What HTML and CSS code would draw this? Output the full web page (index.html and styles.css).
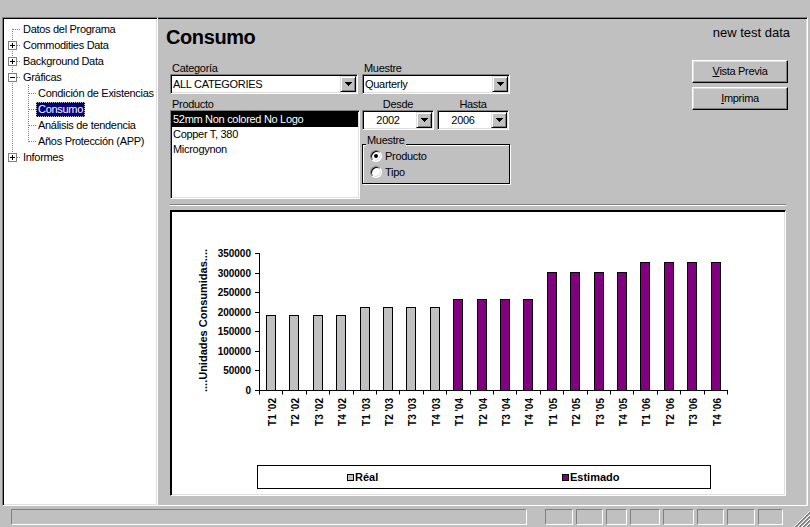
FILE: index.html
```html
<!doctype html>
<html>
<head>
<meta charset="utf-8">
<link rel="stylesheet" href="styles.css">
<title>Consumo</title>
</head>
<body>
<div class="topbar"></div>

<div class="main">
  <div class="tree">
    <div class="node"><span class="cell l-first"></span><span class="node-label">Datos del Programa</span></div>
    <div class="node"><span class="cell l-mid"><span class="box plus"></span></span><span class="node-label">Commodities Data</span></div>
    <div class="node"><span class="cell l-mid"><span class="box plus"></span></span><span class="node-label">Background Data</span></div>
    <div class="node"><span class="cell l-mid"><span class="box minus"></span></span><span class="node-label">Gráficas</span></div>
    <div class="node child"><span class="cell l-pass"></span><span class="cell l-mid"></span><span class="node-label">Condición de Existencias</span></div>
    <div class="node child"><span class="cell l-pass"></span><span class="cell l-mid"></span><span class="node-label selected">Consumo</span></div>
    <div class="node child"><span class="cell l-pass"></span><span class="cell l-mid"></span><span class="node-label">Análisis de tendencia</span></div>
    <div class="node child"><span class="cell l-pass"></span><span class="cell l-last"></span><span class="node-label">Años Protección (APP)</span></div>
    <div class="node"><span class="cell l-last"><span class="box plus"></span></span><span class="node-label">Informes</span></div>
  </div>

  <div class="content">
    <div class="head">
      <h1 class="title">Consumo</h1>
      <div class="tag">new test data</div>
    </div>

    <div class="controls">
      <div class="form">
        <div class="col1">
          <div class="lbl">Categoría</div>
          <div class="combo cat"><span class="combo-text">ALL CATEGORIES</span><span class="drop"></span></div>
          <div class="lbl mt4">Producto</div>
          <div class="list">
            <div class="item sel">52mm Non colored No Logo</div>
            <div class="item">Copper T, 380</div>
            <div class="item">Microgynon</div>
          </div>
        </div>
        <div class="col2">
          <div class="lbl">Muestre</div>
          <div class="combo"><span class="combo-text">Quarterly</span><span class="drop"></span></div>
          <div class="years mt4">
            <div class="year">
              <div class="lbl center">Desde</div>
              <div class="combo"><span class="combo-text center">2002</span><span class="drop"></span></div>
            </div>
            <div class="year">
              <div class="lbl center">Hasta</div>
              <div class="combo"><span class="combo-text center">2006</span><span class="drop"></span></div>
            </div>
          </div>
          <div class="group">
            <div class="legend">Muestre</div>
            <div class="radio-row first"><span class="radio on"></span>Producto</div>
            <div class="radio-row"><span class="radio"></span>Tipo</div>
          </div>
        </div>
      </div>

      <div class="buttons">
        <div class="btn"><u>V</u>ista Previa</div>
        <div class="btn"><u>I</u>mprima</div>
      </div>
    </div>

    <div class="sep"></div>

    <div class="chart">
      <svg class="plot" width="614" height="284" viewBox="171 211 614 284">
        <g stroke="#000" stroke-width="1">
          <g fill="#c0c0c0">
            <rect x="266.5" y="315.5" width="9" height="75"/>
            <rect x="289.5" y="315.5" width="9" height="75"/>
            <rect x="313.5" y="315.5" width="9" height="75"/>
            <rect x="336.5" y="315.5" width="9" height="75"/>
            <rect x="360.5" y="307.5" width="9" height="83"/>
            <rect x="383.5" y="307.5" width="9" height="83"/>
            <rect x="406.5" y="307.5" width="9" height="83"/>
            <rect x="430.5" y="307.5" width="9" height="83"/>
          </g>
          <g fill="#800080">
            <rect x="453.5" y="299.5" width="9" height="91"/>
            <rect x="477.5" y="299.5" width="9" height="91"/>
            <rect x="500.5" y="299.5" width="9" height="91"/>
            <rect x="523.5" y="299.5" width="9" height="91"/>
            <rect x="547.5" y="272.5" width="9" height="118"/>
            <rect x="570.5" y="272.5" width="9" height="118"/>
            <rect x="594.5" y="272.5" width="9" height="118"/>
            <rect x="617.5" y="272.5" width="9" height="118"/>
            <rect x="640.5" y="262.5" width="9" height="128"/>
            <rect x="664.5" y="262.5" width="9" height="128"/>
            <rect x="687.5" y="262.5" width="9" height="128"/>
            <rect x="711.5" y="262.5" width="9" height="128"/>
          </g>
          <path fill="none" d="M259.5 253v138 M259 390.5H728
            M255 390.5h4 M255 370.5h4 M255 351.5h4 M255 331.5h4 M255 312.5h4 M255 292.5h4 M255 273.5h4 M255 253.5h4
            M259.5 390.5v4 M282.5 390.5v4 M306.5 390.5v4 M329.5 390.5v4 M353.5 390.5v4 M376.5 390.5v4 M399.5 390.5v4
            M423.5 390.5v4 M446.5 390.5v4 M470.5 390.5v4 M493.5 390.5v4 M516.5 390.5v4 M540.5 390.5v4 M563.5 390.5v4
            M587.5 390.5v4 M610.5 390.5v4 M633.5 390.5v4 M657.5 390.5v4 M680.5 390.5v4 M704.5 390.5v4 M727.5 390.5v4"/>
        </g>

        <g class="ticks" text-anchor="end">
          <text x="251" y="394">0</text>
          <text x="251" y="374">50000</text>
          <text x="251" y="355">100000</text>
          <text x="251" y="335">150000</text>
          <text x="251" y="316">200000</text>
          <text x="251" y="296">250000</text>
          <text x="251" y="277">300000</text>
          <text x="251" y="257">350000</text>
        </g>

        <text class="axis-title" text-anchor="middle" transform="translate(207 320.5) rotate(-90)">....Unidades Consumidas....</text>

        <g class="ticks" text-anchor="end">
          <text transform="translate(276 398) rotate(-90)">T1 '02</text>
          <text transform="translate(299 398) rotate(-90)">T2 '02</text>
          <text transform="translate(323 398) rotate(-90)">T3 '02</text>
          <text transform="translate(346 398) rotate(-90)">T4 '02</text>
          <text transform="translate(370 398) rotate(-90)">T1 '03</text>
          <text transform="translate(393 398) rotate(-90)">T2 '03</text>
          <text transform="translate(416 398) rotate(-90)">T3 '03</text>
          <text transform="translate(440 398) rotate(-90)">T4 '03</text>
          <text transform="translate(463 398) rotate(-90)">T1 '04</text>
          <text transform="translate(487 398) rotate(-90)">T2 '04</text>
          <text transform="translate(510 398) rotate(-90)">T3 '04</text>
          <text transform="translate(533 398) rotate(-90)">T4 '04</text>
          <text transform="translate(557 398) rotate(-90)">T1 '05</text>
          <text transform="translate(580 398) rotate(-90)">T2 '05</text>
          <text transform="translate(604 398) rotate(-90)">T3 '05</text>
          <text transform="translate(627 398) rotate(-90)">T4 '05</text>
          <text transform="translate(650 398) rotate(-90)">T1 '06</text>
          <text transform="translate(674 398) rotate(-90)">T2 '06</text>
          <text transform="translate(697 398) rotate(-90)">T3 '06</text>
          <text transform="translate(721 398) rotate(-90)">T4 '06</text>
        </g>

        <rect x="257.5" y="465.5" width="453" height="23" fill="#fff" stroke="#000"/>
        <rect x="347.5" y="474.5" width="6" height="6" fill="#c0c0c0" stroke="#000"/>
        <text class="legend-text" x="355" y="481">Réal</text>
        <rect x="562.5" y="474.5" width="6" height="6" fill="#800080" stroke="#000"/>
        <text class="legend-text" x="570" y="481">Estimado</text>
      </svg>
    </div>
  </div>
</div>

<div class="status">
  <div class="pane pane-main"></div>
  <div class="panes">
    <div class="pane" style="width:28px"></div>
    <div class="pane" style="width:27px"></div>
    <div class="pane" style="width:21px"></div>
    <div class="pane" style="width:30px"></div>
    <div class="pane" style="width:31px"></div>
    <div class="pane" style="width:27px"></div>
    <div class="pane" style="width:28px"></div>
    <div class="pane" style="width:25px"></div>
  </div>
  <svg class="grip" width="17" height="17" viewBox="0 0 17 17">
    <path d="M17 1L1 17 M17 5L5 17 M17 9L9 17 M17 13L13 17" stroke="#fff" fill="none"/>
    <path d="M17 2L2 17 M17 3L3 17 M17 6L6 17 M17 7L7 17 M17 10L10 17 M17 11L11 17 M17 14L14 17 M17 15L15 17" stroke="#808080" fill="none"/>
  </svg>
</div>
</body>
</html>
```

FILE: styles.css
```css
* {
    box-sizing: border-box;
}
html,
body {
    margin: 0;
    padding: 0;
}
body {
    width: 810px;
    height: 527px;
    overflow: hidden;
    background: #c0c0c0;
    font-family: "Liberation Sans", Arial, sans-serif;
    font-size: 11px;
    letter-spacing: -0.3px;
    color: #000;
}
.topbar {
    height: 17px;
}
.main {
    display: flex;
    height: 489px;
    padding-left: 2px;
}

/* tree */
.tree {
    width: 156px;
    overflow: hidden;
    background: #fff;
    border: 1px solid;
    border-color: #808080 #fff #fff #808080;
    box-shadow: inset 1px 1px #000, inset -1px -1px #dfdfdf;
    padding: 3px 0 0 1px;
}
.node {
    display: flex;
    align-items: center;
    height: 16px;
}
.cell {
    width: 16px;
    height: 16px;
    flex: none;
    background-repeat: no-repeat;
}
.l-first,
.l-mid,
.l-last {
    background-image:
        repeating-linear-gradient(to bottom, #808080 0 1px, transparent 1px 2px),
        repeating-linear-gradient(to right, #808080 0 1px, transparent 1px 2px);
}
.l-mid {
    background-size: 1px 16px, 8px 1px;
    background-position: 8px 0, 9px 8px;
}
.l-first {
    background-size: 1px 8px, 8px 1px;
    background-position: 8px 8px, 9px 8px;
}
.l-last {
    background-size: 1px 9px, 8px 1px;
    background-position: 8px 0, 9px 8px;
}
.l-pass {
    background-image: repeating-linear-gradient(to bottom, #808080 0 1px, transparent 1px 2px);
    background-size: 1px 16px;
    background-position: 8px 0;
}
.box {
    display: block;
    width: 9px;
    height: 9px;
    margin: 4px 0 0 4px;
    border: 1px solid #808080;
    background: linear-gradient(#000, #000) 1px 3px / 5px 1px no-repeat, #fff;
}
.box.plus {
    background:
        linear-gradient(#000, #000) 3px 1px / 1px 5px no-repeat,
        linear-gradient(#000, #000) 1px 3px / 5px 1px no-repeat,
        #fff;
}
.node-label {
    line-height: 13px;
    border: 1px solid transparent;
    padding: 0 1px;
    margin-left: 1px;
    white-space: nowrap;
}
.child .node-label {
    margin-left: 0;
}
.node-label.selected {
    background: #000080;
    color: #fff;
    border: 1px dotted #c0c0c0;
}

/* right pane */
.content {
    width: 650px;
    border-top: 1px solid #808080;
    border-right: 1px solid #fff;
    border-bottom: 1px solid #fff;
    box-shadow: inset 0 1px #000, inset -1px 0 #dfdfdf;
    padding: 7px 21px 0 12px;
}
.head {
    display: flex;
    justify-content: space-between;
    align-items: flex-start;
}
.title {
    margin: 0 0 0 -4px;
    font-size: 20px;
    line-height: 24px;
    font-weight: bold;
    letter-spacing: -0.4px;
}
.tag {
    font-size: 13px;
    line-height: 15px;
    letter-spacing: 0;
    margin-right: -4px;
}
.controls {
    display: flex;
    justify-content: space-between;
    align-items: flex-start;
    margin-top: 11px;
}
.form {
    display: flex;
    gap: 2px;
    padding-top: 2px;
}
.col1 {
    width: 190px;
}
.col2 {
    width: 148px;
}
.lbl {
    height: 12px;
    line-height: 12px;
    padding-left: 2px;
    white-space: nowrap;
}
.center {
    text-align: center;
}
.lbl.center {
    padding-left: 0;
}
.mt4 {
    margin-top: 4px;
}
.combo {
    display: flex;
    height: 20px;
    background: #fff;
    border: 1px solid;
    border-color: #808080 #fff #fff #808080;
    box-shadow: inset 1px 1px #000, inset -1px -1px #dfdfdf;
    padding: 1px;
}
.combo.cat {
    width: 188px;
}
.combo-text {
    flex: 1;
    padding-left: 1px;
    line-height: 16px;
    white-space: nowrap;
    overflow: hidden;
}
.combo-text.center {
    padding: 0 4px 0 0;
}
.drop {
    width: 16px;
    height: 16px;
    flex: none;
    display: flex;
    align-items: center;
    justify-content: center;
    background: #c0c0c0;
    border: 1px solid;
    border-color: #dfdfdf #000 #000 #dfdfdf;
    box-shadow: inset 1px 1px #fff, inset -1px -1px #808080;
}
.drop::before {
    content: "";
    width: 7px;
    height: 4px;
    background:
        linear-gradient(#000, #000) 0 0 / 7px 1px no-repeat,
        linear-gradient(#000, #000) 1px 1px / 5px 1px no-repeat,
        linear-gradient(#000, #000) 2px 2px / 3px 1px no-repeat,
        linear-gradient(#000, #000) 3px 3px / 1px 1px no-repeat;
}
.list {
    height: 89px;
    background: #fff;
    border: 1px solid;
    border-color: #808080 #fff #fff #808080;
    box-shadow: inset 1px 1px #000, inset -1px -1px #dfdfdf;
    padding: 1px;
}
.item {
    height: 15px;
    line-height: 15px;
    padding-left: 1px;
    white-space: nowrap;
}
.item.sel {
    background: #000;
    color: #fff;
}
.years {
    display: flex;
    gap: 3px;
}
.year {
    width: 72px;
}
.group {
    height: 40px;
    margin-top: 14px;
    border: 1px solid #000;
    box-shadow: inset 1px 1px #fff, 1px 1px #fff;
    padding-left: 7px;
}
.legend {
    width: max-content;
    margin: -11px 0 0 -4px;
    padding: 0 1px;
    line-height: 12px;
    background: #c0c0c0;
}
.radio-row {
    display: flex;
    align-items: center;
    height: 16px;
}
.radio-row.first {
    margin-top: 2px;
}
.radio {
    display: flex;
    align-items: center;
    justify-content: center;
    width: 12px;
    height: 12px;
    margin-right: 3px;
    border-radius: 50%;
    background: #fff;
    border: 1px solid;
    border-color: #808080 #fff #fff #808080;
    box-shadow: inset 1px 1px #000, inset -1px -1px #dfdfdf;
}
.radio.on::before {
    content: "";
    width: 4px;
    height: 4px;
    border-radius: 50%;
    background: #000;
}
.buttons {
    display: flex;
    flex-direction: column;
    gap: 4px;
    margin-right: -2px;
}
.btn {
    width: 96px;
    height: 23px;
    line-height: 21px;
    text-align: center;
    background: #c0c0c0;
    border: 1px solid;
    border-color: #fff #000 #000 #fff;
    box-shadow: inset -1px -1px #808080, inset 1px 1px #dfdfdf;
}
.sep {
    margin-top: 5px;
    border-top: 1px solid #808080;
    border-bottom: 1px solid #fff;
}
.chart {
    height: 286px;
    margin-top: 4px;
    background: #fff;
    border: 1px solid;
    border-color: #000 #fff #fff #000;
    box-shadow: inset 1px 1px #000, inset -1px -1px #dfdfdf;
}
.plot {
    display: block;
}
.plot text {
    font-family: "Liberation Sans", Arial, sans-serif;
    font-weight: bold;
    font-size: 10px;
    letter-spacing: 0;
    fill: #000;
}
.plot .axis-title,
.plot .legend-text {
    font-size: 11px;
}

/* status bar */
.status {
    display: flex;
    align-items: flex-start;
    height: 21px;
    padding: 3px 0 0 11px;
}
.pane {
    height: 16px;
    border: 1px solid;
    border-color: #808080 #fff #fff #808080;
}
.pane-main {
    width: 516px;
}
.panes {
    display: flex;
    gap: 3px;
    margin-left: 18px;
}
.grip {
    margin-left: auto;
    margin-top: 1px;
}
```
